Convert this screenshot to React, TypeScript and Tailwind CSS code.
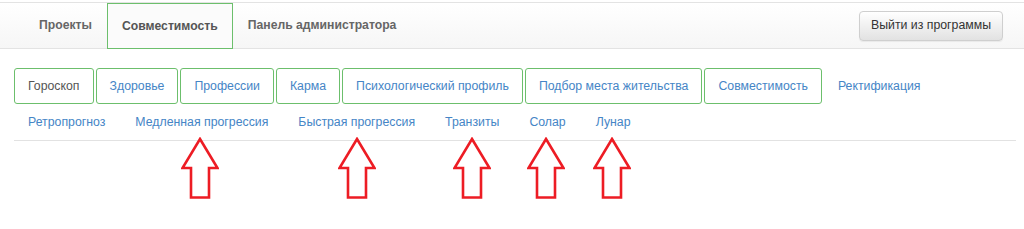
import React from "react";

const font = { fontFamily: '"Liberation Sans", Arial, sans-serif' };

const tabs: { label: string; boxed: boolean; active?: boolean }[] = [
  { label: "Гороскоп", boxed: true, active: true },
  { label: "Здоровье", boxed: true },
  { label: "Профессии", boxed: true },
  { label: "Карма", boxed: true },
  { label: "Психологический профиль", boxed: true },
  { label: "Подбор места жительства", boxed: true },
  { label: "Совместимость", boxed: true },
  { label: "Ректификация", boxed: false },
  { label: "Ретропрогноз", boxed: false },
  { label: "Медленная прогрессия", boxed: false },
  { label: "Быстрая прогрессия", boxed: false },
  { label: "Транзиты", boxed: false },
  { label: "Солар", boxed: false },
  { label: "Лунар", boxed: false },
];

function Arrow({ left }: { left: number }) {
  return (
    <svg
      className="absolute top-[137px] h-[62px] w-[38px]"
      style={{ left }}
      viewBox="0 0 38 62"
    >
      <polygon
        points="19,2 36.5,31 28,31 28,60.5 10,60.5 10,31 1.5,31"
        fill="none"
        stroke="#ed1c24"
        strokeWidth="2.6"
        strokeLinejoin="miter"
      />
    </svg>
  );
}

export default function App() {
  return (
    <div className="relative h-[229px] w-[1024px] overflow-hidden bg-white" style={font}>
      <div className="h-[2px]" />
      <div className="flex h-[47px] items-stretch justify-between border-y border-[#e3e3e3] bg-gradient-to-b from-white to-[#f6f6f6]">
        <div className="flex items-stretch pl-[24px] text-[12.2px] font-bold text-[#666]">
          <div className="flex items-center border border-transparent px-[14px]">Проекты</div>
          <div className="-mb-px flex items-center border border-[#6cbf6c] bg-[#fbfbfb] px-[14px] text-[#555]">
            Совместимость
          </div>
          <div className="flex items-center border border-transparent px-[14px]">Панель администратора</div>
        </div>
        <div className="flex items-center pr-[21px]">
          <button className="h-[30px] rounded-[4px] border border-[#cfcfcf] bg-gradient-to-b from-white to-[#e2e2e2] px-[11px] text-[12.3px] text-[#333] shadow-[0_1px_1px_rgba(0,0,0,0.06)]">
            Выйти из программы
          </button>
        </div>
      </div>
      <div className="ml-[14px] mr-[8px] mt-[19px] flex flex-wrap gap-x-[2px] border-b border-[#e2e2e2] text-[12.3px]">
        {tabs.map((t) => (
          <div
            key={t.label}
            className={
              t.boxed
                ? "flex h-[36px] items-center rounded-[3px] border border-[#6cbf6c] px-[13px] " +
                  (t.active ? "text-[#555]" : "text-[#4585c6]")
                : "flex h-[36px] items-center border border-transparent px-[13px] text-[#4585c6]"
            }
          >
            {t.label}
          </div>
        ))}
      </div>
      <Arrow left={181} />
      <Arrow left={338} />
      <Arrow left={453} />
      <Arrow left={527} />
      <Arrow left={593} />
    </div>
  );
}
